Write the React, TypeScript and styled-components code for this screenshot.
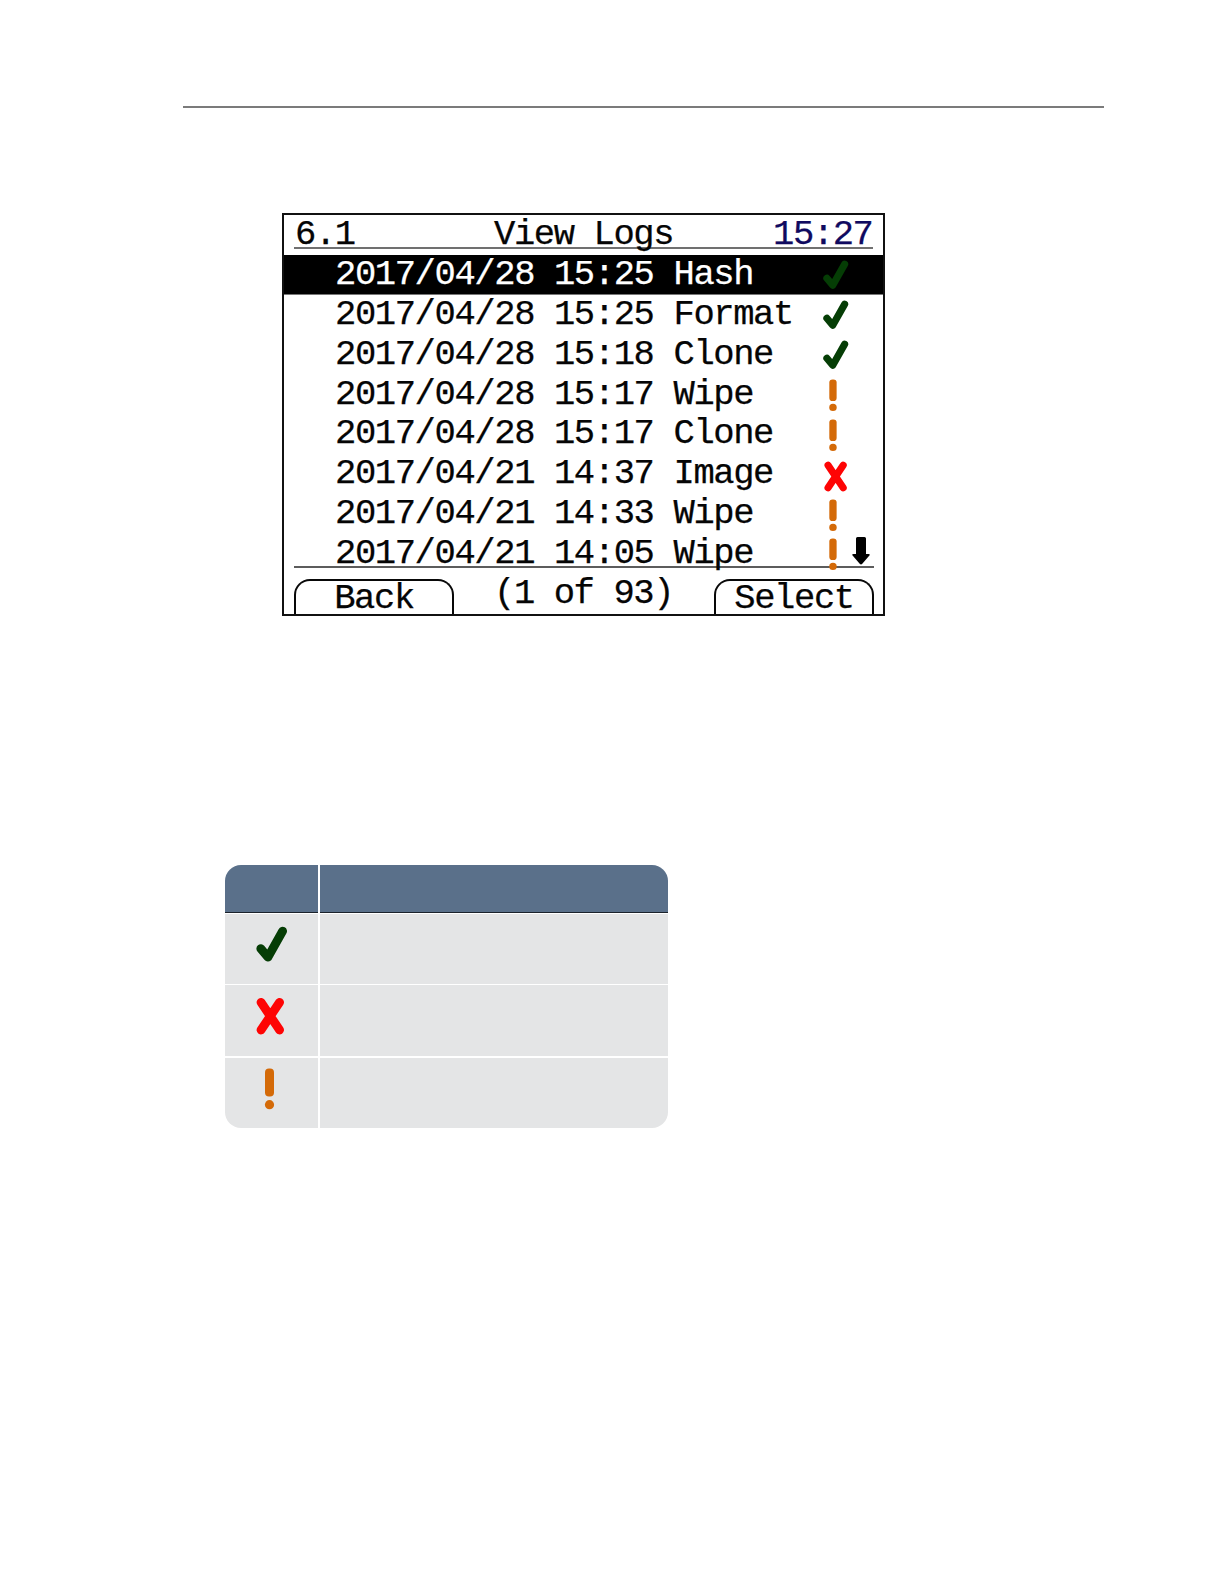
import React from "react";
// Libs
import styled, { createGlobalStyle } from "styled-components";

type Status = "success" | "error" | "warning";

const LOGS: { time: string; action: string; status: Status }[] = [
  { time: "2017/04/28 15:25", action: "Hash", status: "success" },
  { time: "2017/04/28 15:25", action: "Format", status: "success" },
  { time: "2017/04/28 15:18", action: "Clone", status: "success" },
  { time: "2017/04/28 15:17", action: "Wipe", status: "warning" },
  { time: "2017/04/28 15:17", action: "Clone", status: "warning" },
  { time: "2017/04/21 14:37", action: "Image", status: "error" },
  { time: "2017/04/21 14:33", action: "Wipe", status: "warning" },
  { time: "2017/04/21 14:05", action: "Wipe", status: "warning" },
];

const LEGEND: Status[] = ["success", "error", "warning"];

const ICON_OFFSET = {
  success: "5px 0 0 0",
  error: "6.5px 0 0 1px",
  warning: "4.5px 0 0 0",
};

// All three marks share one 32x42 box
const StatusIcon: React.FC<{ status: Status; width: number; height: number }> = ({
  status,
  width,
  height,
}) => (
  <StatusSvg viewBox="0 0 32 42" preserveAspectRatio="none" {...{ width, height }}>
    {status === "success" && (
      <path
        d="M4.8 22.6 12 31.2 26.6 5.2"
        fill="none"
        stroke="#053d05"
        strokeWidth="8.8"
        strokeLinecap="round"
        strokeLinejoin="round"
      />
    )}
    {status === "error" && (
      <path
        d="M5 5.3 23.6 33M23.6 5.3 5 33"
        fill="none"
        stroke="#fe0404"
        strokeWidth="8.8"
        strokeLinecap="round"
      />
    )}
    {status === "warning" && (
      <>
        <rect x="9" y="0.5" width="9" height="28" rx="4" fill="#d46a08" />
        <circle cx="13.5" cy="36.7" r="4.6" fill="#d46a08" />
      </>
    )}
  </StatusSvg>
);

const App: React.FC = () => (
  <Page>
    <GlobalStyle />
    <PageRule />
    <Screen>
      <ScreenHeader>
        <span>6.1</span>
        <span>View Logs</span>
        <Clock>15:27</Clock>
      </ScreenHeader>
      <LogList>
        {LOGS.map(({ time, action, status }, index) => (
          <LogRow key={index} selected={index === 0}>
            <span>{time}</span>
            <span>{action}</span>
            <IconCell status={status}>
              <StatusIcon status={status} width={26} height={status === "warning" ? 32.5 : 34} />
            </IconCell>
            {index === LOGS.length - 1 && (
              <ScrollArrow viewBox="0 0 18 28">
                <path
                  d="M4 1.5Q4 0 5.5 0H12.5Q14 0 14 1.5V17H16.5Q18.5 17 17.4 18.6L10.3 26.8Q9 28.2 7.7 26.8L.6 18.6Q-.5 17 1.5 17H4Z"
                  fill="#000"
                />
              </ScrollArrow>
            )}
          </LogRow>
        ))}
      </LogList>
      <ScreenFooter>
        <SoftKey>Back</SoftKey>
        <Counter>(1 of 93)</Counter>
        <SoftKey>Select</SoftKey>
      </ScreenFooter>
    </Screen>
    <LegendTable>
      <LegendHead />
      <LegendHead />
      {LEGEND.map((status) => (
        <React.Fragment key={status}>
          <LegendCell last={status === "warning"}>
            <StatusIcon status={status} width={32} height={42} />
          </LegendCell>
          <LegendCell last={status === "warning"} />
        </React.Fragment>
      ))}
    </LegendTable>
  </Page>
);

const GlobalStyle = createGlobalStyle`
  * {
    box-sizing: border-box;
  }
  body {
    margin: 0;
    background-color: #fff;
  }
`;

const Page = styled.main`
  display: flex;
  flex-direction: column;
  height: 1584px;
  padding-top: 106px;
`;

const PageRule = styled.div`
  flex: none;
  width: 921px;
  height: 2px;
  margin-left: 183px;
  background-color: #7b7b7b;
`;

const Screen = styled.section`
  display: flex;
  flex-direction: column;
  flex: none;
  width: 603px;
  height: 403px;
  margin: 105px 0 0 282px;
  border: 2px solid #111;
  color: #050505;
  font-family: "Liberation Mono", monospace;
  font-size: 35.5px;
  letter-spacing: -1.4px;
  white-space: pre;
  -webkit-text-stroke: 0.25px currentColor;
`;

const ScreenHeader = styled.header`
  display: grid;
  grid-template-columns: 199px 279px auto;
  flex: none;
  height: 34px;
  margin: 0 10px 6px;
  padding-left: 1px;
  border-bottom: 2px solid #707070;
  line-height: 39px;
`;

const Clock = styled.span`
  color: #100a60;
`;

const LogList = styled.ul`
  position: relative;
  z-index: 1;
  flex: none;
  height: 310.5px;
  margin: 0;
  padding: 0;
  list-style: none;
`;

const LogRow = styled.li<{ selected: boolean }>`
  display: grid;
  grid-template-columns: 338.5px 149.5px 29px 18px;
  height: 39.85px;
  padding-left: 51px;
  line-height: 39px;
  color: ${({ selected }) => (selected ? "#fff" : "#050505")};
  background-color: ${({ selected }) => (selected ? "#000" : "transparent")};
  box-shadow: ${({ selected }) => (selected ? "inset 0 -1px #777" : "none")};
`;

const IconCell = styled.span<{ status: Status }>`
  padding: ${({ status }) => ICON_OFFSET[status]};
  margin-left: ${({ status }) => (status === "warning" ? "-1px" : "0")};
`;

const StatusSvg = styled.svg`
  display: block;
`;

const ScrollArrow = styled.svg`
  display: block;
  width: 18px;
  height: 28px;
  margin-top: 3px;
`;

const ScreenFooter = styled.footer`
  display: grid;
  grid-template-columns: 160px 1fr 160px;
  align-items: end;
  flex: 1;
  margin: 0 9px 0 10px;
  border-top: 2px solid #5c5c5c;
`;

const SoftKey = styled.div`
  height: 35px;
  border: 2px solid #080808;
  border-bottom: 0;
  border-radius: 16px 16px 0 0;
  line-height: 36px;
  text-align: center;
`;

const Counter = styled.div`
  height: 41px;
  padding-left: 40px;
  line-height: 42px;
`;

const LegendTable = styled.div`
  display: grid;
  grid-template-columns: 93px 348px;
  grid-template-rows: 48px 70px 71px 71px;
  gap: 1px 2px;
  flex: none;
  width: 443px;
  margin: 249px 0 0 225px;
  border-radius: 16px;
  overflow: hidden;
`;

const LegendHead = styled.div`
  border-bottom: 1px solid #1b222b;
  background-color: #5a708a;
`;

const LegendCell = styled.div<{ last: boolean }>`
  padding: ${({ last }) => (last ? "10px" : "12px")} 0 0 31px;
  border-top: ${({ last }) => (last ? "1px solid #fff" : "0")};
  background-color: #e4e5e6;
`;

export default App;
